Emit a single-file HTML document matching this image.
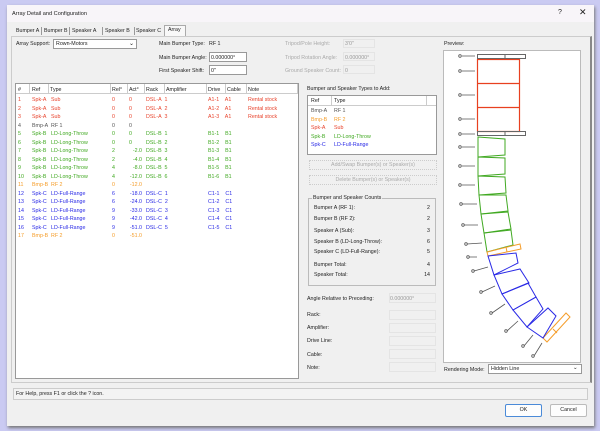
<!DOCTYPE html><html><head><style>
body{margin:0;width:600px;height:431px;background:#cacaf2;font-family:"Liberation Sans",sans-serif;font-size:5.3px;color:#222;position:relative;overflow:hidden}
.a{position:absolute;white-space:nowrap}
.box{position:absolute;background:#fff;border:1px solid #aaa}
.fld{position:absolute;border:1px solid #e4e4e4;background:#f0f0f0}
.r{color:#e8432c}.g{color:#41a922}.o{color:#f59d2a}.b{color:#2a2ae6}.k{color:#555}
.t{position:absolute;top:28px;white-space:nowrap;font-size:5.3px}
</style></head><body>
<div class="a" style="left:7px;top:5px;width:587px;height:421px;background:#f0f0f0;box-shadow:1px 2px 3px #777"></div>
<div class="a" style="left:7px;top:5px;width:587px;height:17px;background:#f8f5f9"></div>
<div class="a" style="left:12px;top:11px;font-size:5.6px">Array Detail and Configuration</div>
<div class="a" style="left:558px;top:9px;font-size:7px">?</div>
<div class="a" style="left:579px;top:7px;font-size:9px">✕</div>
<div class="t" style="left:16px">Bumper A</div><div class="a" style="left:41px;top:27px;width:1px;height:8px;background:#999"></div>
<div class="t" style="left:44px">Bumper B</div><div class="a" style="left:69px;top:27px;width:1px;height:8px;background:#999"></div>
<div class="t" style="left:72px">Speaker A</div><div class="a" style="left:102px;top:27px;width:1px;height:8px;background:#999"></div>
<div class="t" style="left:105px">Speaker B</div><div class="a" style="left:134px;top:27px;width:1px;height:8px;background:#999"></div>
<div class="t" style="left:136px">Speaker C</div>
<div class="a" style="left:164px;top:25px;width:20px;height:11px;background:#f8f8f8;border:1px solid #aaa;border-bottom:none"></div>
<div class="t" style="left:168px;top:27px">Array</div>
<div class="a" style="left:11px;top:36px;width:578px;height:345px;border:1px solid #ccc;border-right:2px solid #888"></div>
<div class="a" style="left:16px;top:41px">Array Support:</div>
<div class="a" style="left:53px;top:39px;width:82px;height:8px;background:#fff;border:1px solid #999"></div>
<div class="a" style="left:56px;top:41px">Rown-Motors</div>
<div class="a" style="left:129px;top:40px;font-size:6px">⌄</div>
<div class="a" style="left:159px;top:41px">Main Bumper Type:</div><div class="a" style="left:209px;top:41px">RF 1</div>
<div class="a" style="left:159px;top:55px">Main Bumper Angle:</div>
<div class="a" style="left:209px;top:52px;width:36px;height:8px;background:#fff;border:1px solid #999"></div><div class="a" style="left:211px;top:55px">0.000000°</div>
<div class="a" style="left:159px;top:68px">First Speaker Shift:</div>
<div class="a" style="left:209px;top:65px;width:36px;height:8px;background:#fff;border:1px solid #999"></div><div class="a" style="left:211px;top:68px">0"</div>
<div class="a" style="left:285px;top:41px;color:#aaa">Tripod/Pole Height:</div><div class="fld" style="left:343px;top:39px;width:30px;height:7px"></div><div class="a" style="left:345px;top:41px;color:#999">3'0"</div>
<div class="a" style="left:285px;top:55px;color:#aaa">Tripod Rotation Angle:</div><div class="fld" style="left:343px;top:52px;width:30px;height:7px"></div><div class="a" style="left:345px;top:55px;color:#999">0.000000°</div>
<div class="a" style="left:285px;top:68px;color:#aaa">Ground Speaker Count:</div><div class="fld" style="left:343px;top:65px;width:30px;height:7px"></div><div class="a" style="left:345px;top:68px;color:#999">0</div>
<div class="box" style="left:15px;top:83px;width:282px;height:294px;border-color:#999"></div>
<div class="a" style="left:16px;top:84px;width:282px;height:9px;border-bottom:1px solid #ccc"></div>
<div class="a" style="left:18px;top:87px">#</div><div class="a" style="left:32px;top:87px">Ref</div><div class="a" style="left:50px;top:87px">Type</div><div class="a" style="left:112px;top:87px">Rel°</div><div class="a" style="left:129px;top:87px">Act°</div><div class="a" style="left:146px;top:87px">Rack</div><div class="a" style="left:166px;top:87px">Amplifier</div><div class="a" style="left:208px;top:87px">Drive</div><div class="a" style="left:227px;top:87px">Cable</div><div class="a" style="left:248px;top:87px">Note</div>
<svg class="a" style="left:0;top:0" width="600" height="431"><g stroke="#ccc" stroke-width="1">
<line x1="29.5" y1="84" x2="29.5" y2="93"/><line x1="48.5" y1="84" x2="48.5" y2="93"/><line x1="110.5" y1="84" x2="110.5" y2="93"/><line x1="127.5" y1="84" x2="127.5" y2="93"/><line x1="144.5" y1="84" x2="144.5" y2="93"/><line x1="164.5" y1="84" x2="164.5" y2="93"/><line x1="206.5" y1="84" x2="206.5" y2="93"/><line x1="225.5" y1="84" x2="225.5" y2="93"/><line x1="246.5" y1="84" x2="246.5" y2="93"/><line x1="297.5" y1="84" x2="297.5" y2="93"/></g></svg>
<div class="a" style="left:18px;top:96px;line-height:8.5px">
<div class="r">1</div><div class="r">2</div><div class="r">3</div><div class="k">4</div><div class="g">5</div><div class="g">6</div><div class="g">7</div><div class="g">8</div><div class="g">9</div><div class="g">10</div><div class="o">11</div><div class="b">12</div><div class="b">13</div><div class="b">14</div><div class="b">15</div><div class="b">16</div><div class="o">17</div></div>
<div class="a" style="left:32px;top:96px;line-height:8.5px">
<div class="r">Spk-A</div><div class="r">Spk-A</div><div class="r">Spk-A</div><div class="k">Bmp-A</div><div class="g">Spk-B</div><div class="g">Spk-B</div><div class="g">Spk-B</div><div class="g">Spk-B</div><div class="g">Spk-B</div><div class="g">Spk-B</div><div class="o">Bmp-B</div><div class="b">Spk-C</div><div class="b">Spk-C</div><div class="b">Spk-C</div><div class="b">Spk-C</div><div class="b">Spk-C</div><div class="o">Bmp-B</div></div>
<div class="a" style="left:51px;top:96px;line-height:8.5px">
<div class="r">Sub</div><div class="r">Sub</div><div class="r">Sub</div><div class="k">RF 1</div><div class="g">LD-Long-Throw</div><div class="g">LD-Long-Throw</div><div class="g">LD-Long-Throw</div><div class="g">LD-Long-Throw</div><div class="g">LD-Long-Throw</div><div class="g">LD-Long-Throw</div><div class="o">RF 2</div><div class="b">LD-Full-Range</div><div class="b">LD-Full-Range</div><div class="b">LD-Full-Range</div><div class="b">LD-Full-Range</div><div class="b">LD-Full-Range</div><div class="o">RF 2</div></div>
<div class="a" style="left:112px;top:96px;line-height:8.5px">
<div class="r">0</div><div class="r">0</div><div class="r">0</div><div class="k">0</div><div class="g">0</div><div class="g">0</div><div class="g">2</div><div class="g">2</div><div class="g">4</div><div class="g">4</div><div class="o">0</div><div class="b">6</div><div class="b">6</div><div class="b">9</div><div class="b">9</div><div class="b">9</div><div class="o">0</div></div>
<div class="a" style="left:129px;top:96px;line-height:8.5px;text-align:right;width:13px">
<div class="r" style="text-align:left">0</div><div class="r" style="text-align:left">0</div><div class="r" style="text-align:left">0</div><div class="k" style="text-align:left">0</div><div class="g" style="text-align:left">0</div><div class="g" style="text-align:left">0</div><div class="g">-2.0</div><div class="g">-4.0</div><div class="g">-8.0</div><div class="g">-12.0</div><div class="o">-12.0</div><div class="b">-18.0</div><div class="b">-24.0</div><div class="b">-33.0</div><div class="b">-42.0</div><div class="b">-51.0</div><div class="o">-51.0</div></div>
<div class="a" style="left:146px;top:96px;line-height:8.5px">
<div class="r">DSL-A&nbsp; 1</div><div class="r">DSL-A&nbsp; 2</div><div class="r">DSL-A&nbsp; 3</div><div>&nbsp;</div><div class="g">DSL-B&nbsp; 1</div><div class="g">DSL-B&nbsp; 2</div><div class="g">DSL-B&nbsp; 3</div><div class="g">DSL-B&nbsp; 4</div><div class="g">DSL-B&nbsp; 5</div><div class="g">DSL-B&nbsp; 6</div><div>&nbsp;</div><div class="b">DSL-C&nbsp; 1</div><div class="b">DSL-C&nbsp; 2</div><div class="b">DSL-C&nbsp; 3</div><div class="b">DSL-C&nbsp; 4</div><div class="b">DSL-C&nbsp; 5</div></div>
<div class="a" style="left:208px;top:96px;line-height:8.5px">
<div class="r">A1-1&nbsp;&nbsp;&nbsp; A1</div><div class="r">A1-2&nbsp;&nbsp;&nbsp; A1</div><div class="r">A1-3&nbsp;&nbsp;&nbsp; A1</div><div>&nbsp;</div><div class="g">B1-1&nbsp;&nbsp;&nbsp; B1</div><div class="g">B1-2&nbsp;&nbsp;&nbsp; B1</div><div class="g">B1-3&nbsp;&nbsp;&nbsp; B1</div><div class="g">B1-4&nbsp;&nbsp;&nbsp; B1</div><div class="g">B1-5&nbsp;&nbsp;&nbsp; B1</div><div class="g">B1-6&nbsp;&nbsp;&nbsp; B1</div><div>&nbsp;</div><div class="b">C1-1&nbsp;&nbsp;&nbsp; C1</div><div class="b">C1-2&nbsp;&nbsp;&nbsp; C1</div><div class="b">C1-3&nbsp;&nbsp;&nbsp; C1</div><div class="b">C1-4&nbsp;&nbsp;&nbsp; C1</div><div class="b">C1-5&nbsp;&nbsp;&nbsp; C1</div></div>
<div class="a r" style="left:248px;top:96px;line-height:8.5px"><div>Rental stock</div><div>Rental stock</div><div>Rental stock</div></div>
<div class="a" style="left:307px;top:86px">Bumper and Speaker Types to Add:</div>
<div class="box" style="left:307px;top:95px;width:128px;height:58px;border-color:#999"></div>
<div class="a" style="left:308px;top:96px;width:128px;height:9px;border-bottom:1px solid #ccc"></div>
<div class="a" style="left:311px;top:98px">Ref</div><div class="a" style="left:334px;top:98px">Type</div>
<div class="a" style="left:331px;top:96px;width:1px;height:9px;background:#ccc"></div><div class="a" style="left:426px;top:96px;width:1px;height:9px;background:#ccc"></div>
<div class="a" style="left:311px;top:107px;line-height:8.5px"><div class="k">Bmp-A</div><div class="o">Bmp-B</div><div class="r">Spk-A</div><div class="g">Spk-B</div><div class="b">Spk-C</div></div>
<div class="a" style="left:334px;top:107px;line-height:8.5px"><div class="k">RF 1</div><div class="o">RF 2</div><div class="r">Sub</div><div class="g">LD-Long-Throw</div><div class="b">LD-Full-Range</div></div>
<div class="a" style="left:309px;top:160px;width:126px;height:8px;border:1px dotted #ccc;text-align:center;color:#aaa;line-height:8px">Add/Swap Bumper(s) or Speaker(s)</div>
<div class="a" style="left:309px;top:175px;width:126px;height:8px;border:1px dotted #ccc;text-align:center;color:#aaa;line-height:8px">Delete Bumper(s) or Speaker(s)</div>
<div class="a" style="left:308px;top:198px;width:126px;height:86px;border:1px solid #bbb"></div>
<div class="a" style="left:312px;top:195px;background:#f0f0f0;padding:0 1px">Bumper and Speaker Counts</div>
<div class="a" style="left:314px;top:203px;line-height:10.5px"><div>Bumper A (RF 1):</div><div>Bumper B (RF 2):</div><div style="margin-top:2px">Speaker A (Sub):</div><div>Speaker B (LD-Long-Throw):</div><div>Speaker C (LD-Full-Range):</div><div style="margin-top:2px">Bumper Total:</div><div>Speaker Total:</div></div>
<div class="a" style="left:422px;top:203px;line-height:10.5px;text-align:right;width:8px"><div>2</div><div>2</div><div style="margin-top:2px">3</div><div>6</div><div>5</div><div style="margin-top:2px">4</div><div>14</div></div>
<div class="a" style="left:307px;top:296px">Angle Relative to Preceding:</div>
<div class="fld" style="left:389px;top:293px;width:45px;height:8px"></div><div class="a" style="left:390px;top:296px;color:#999">0.000000°</div>
<div class="a" style="left:307px;top:312px">Rack:</div><div class="fld" style="left:389px;top:310px;width:45px;height:8px"></div>
<div class="a" style="left:307px;top:325px">Amplifier:</div><div class="fld" style="left:389px;top:323px;width:45px;height:8px"></div>
<div class="a" style="left:307px;top:338px">Drive Line:</div><div class="fld" style="left:389px;top:336px;width:45px;height:8px"></div>
<div class="a" style="left:307px;top:352px">Cable:</div><div class="fld" style="left:389px;top:349px;width:45px;height:8px"></div>
<div class="a" style="left:307px;top:365px">Note:</div><div class="fld" style="left:389px;top:362px;width:45px;height:8px"></div>
<div class="a" style="left:444px;top:41px">Preview:</div>
<div class="box" style="left:443px;top:50px;width:136px;height:311px;border-color:#bbb"></div>
<svg class="a" style="left:0;top:0" width="600" height="431" fill="none" stroke-width="1">
<rect x="477.5" y="59.5" width="42" height="72" stroke="#e84020" stroke-width="1.2" fill="none"/>
<line x1="478" y1="83.5" x2="519" y2="83.5" stroke="#e84020" stroke-width="1.2"/><line x1="478" y1="107.5" x2="519" y2="107.5" stroke="#e84020" stroke-width="1.2"/>
<rect x="477.5" y="54.5" width="48" height="4" stroke="#666" fill="none"/><line x1="505" y1="54" x2="505" y2="59" stroke="#666"/>
<rect x="477.5" y="131.5" width="48" height="4" stroke="#666" fill="none"/><line x1="505" y1="131" x2="505" y2="136" stroke="#666"/>
<g stroke="#41a922" fill="none">
<polygon points="478,137 505,139 505,155 478,157"/><polygon points="478,157 505,158 505,174 478,176"/><polygon points="478,176 505,177 506,193 479,195"/><polygon points="479,195 506,195 508,211 481,214"/><polygon points="481,214 508,212 511,229 484,233"/><polygon points="484,233 511,230 513,245 487,252"/></g>
<g stroke="#f59d2a" fill="none"><polygon points="487,252 520,244 521,249 488,256"/><line x1="506" y1="247" x2="507" y2="252"/>
<polygon points="543,338 566,313 570,317 547,342"/><line x1="553" y1="329" x2="557" y2="333"/></g>
<g stroke="#2a2ae6" fill="none">
<polygon points="488,256 516,253 518,263 494,275"/><polygon points="494,275 520,269 529,283 502,294"/><polygon points="502,294 528,283 536,297 513,310"/><polygon points="513,310 536,297 543,309 527,327"/><polygon points="527,327 548,308 556,316 543,338"/></g>
<path stroke="#555" stroke-width="0.8" fill="none" d="M462 56h13M462 71h13M462 95h13M462 119h13M462 134h13M462 147h13M462 166h13M462 185h13M462 204h15M464 225h14M467 244l15-1M469 257h8M474 271l14-4M482 292l13-6M492 313l13-9M507 331l11-10M524 346l9-11M534 356l8-13"/>
<g fill="#fff" stroke="#555" stroke-width="0.8"><circle cx="460" cy="56" r="1.3"/><circle cx="460" cy="71" r="1.3"/><circle cx="460" cy="95" r="1.3"/><circle cx="460" cy="119" r="1.3"/><circle cx="460" cy="134" r="1.3"/><circle cx="460" cy="147" r="1.3"/><circle cx="460" cy="166" r="1.3"/><circle cx="460" cy="185" r="1.3"/><circle cx="461" cy="204" r="1.3"/><circle cx="463" cy="225" r="1.3"/><circle cx="466" cy="244" r="1.3"/><circle cx="468" cy="257" r="1.3"/><circle cx="473" cy="271" r="1.3"/><circle cx="481" cy="292" r="1.3"/><circle cx="491" cy="313" r="1.3"/><circle cx="506" cy="331" r="1.3"/><circle cx="523" cy="346" r="1.3"/><circle cx="533" cy="356" r="1.3"/></g>
</svg>
<div class="a" style="left:444px;top:367px">Rendering Mode:</div>
<div class="a" style="left:488px;top:364px;width:92px;height:8px;background:#fff;border:1px solid #999"></div>
<div class="a" style="left:491px;top:366px">Hidden Line</div><div class="a" style="left:573px;top:365px">⌄</div>
<div class="a" style="left:13px;top:388px;width:573px;height:10px;border:1px solid #ccc;background:#f3f3f3"></div>
<div class="a" style="left:16px;top:391px">For Help, press F1 or click the ? icon.</div>
<div class="a" style="left:505px;top:404px;width:35px;height:11px;background:#fdfdfd;border:1px solid #4a8ad8;border-radius:2px;text-align:center;line-height:11px">OK</div>
<div class="a" style="left:550px;top:404px;width:35px;height:11px;background:#fdfdfd;border:1px solid #bbb;border-radius:2px;text-align:center;line-height:11px">Cancel</div>
</body></html>
